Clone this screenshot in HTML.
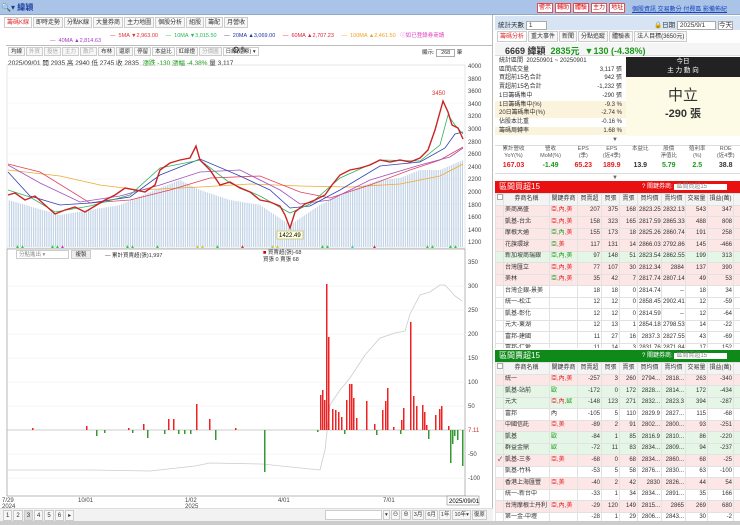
<!DOCTYPE html>
<html><head><meta charset="utf-8"><style>
*{box-sizing:border-box;margin:0;padding:0}
body{width:740px;height:525px;overflow:hidden;background:#fff;font-family:"Liberation Sans","Noto Sans CJK TC",sans-serif;font-size:7px;color:#333;position:relative}
.abs{position:absolute}
.top{left:0;top:0;width:740px;height:15px;background:#a9c4e6;border-bottom:1px solid #8fa9cc}
.btnr{display:inline-block;border:1px solid #e05050;background:#fff;color:#d00;padding:0 1px;height:10px;line-height:9px;margin-right:2px;font-size:6px}
.tabs{white-space:nowrap}
.tabs span{display:inline-block;border:1px solid #ccc;background:#f7f7f7;padding:0 2px;height:11px;line-height:10px;margin-right:1px;font-size:6px;vertical-align:top}
.tb span{height:9px;line-height:8px;font-size:5.5px;padding:0 2px}
.bb span{font-size:5.5px;padding:0 1px;height:10px;line-height:9px}
.wrap{overflow:hidden}
table{border-collapse:collapse;table-layout:fixed;width:245px}
tr{height:11.5px}
td{border:1px solid #e2e2e2;height:11.5px;line-height:9px;font-size:6px;padding:0 1px;white-space:nowrap;overflow:hidden;text-align:right}
td.l{text-align:left}
tr.p td{background:#fde6e6}
tr.g td{background:#e6f6e6}
tr.h td{background:#f4f4f4;text-align:center}
.r{color:#e02020}.gr{color:#1a9a1a}
.cb{display:inline-block;width:6px;height:6px;border:1px solid #aaa;background:#fff}
</style></head><body>
<div class="abs top"></div>
<div class="abs" style="left:1px;top:2px;font-size:8px;color:#1a3f8f">🔍▾ <b style="color:#1c3ea0">緯穎</b></div>
<div class="abs" style="left:537px;top:3px;white-space:nowrap"><span class="btnr">警示</span><span class="btnr">輔助</span><span class="btnr">體驗</span><span class="btnr">主力</span><span class="btnr">地址</span></div>
<div class="abs" style="left:632px;top:4px;color:#1a3fbf;text-decoration:underline;font-size:6px;white-space:nowrap">個股資訊 交易數分 付費區 影備佈紀</div>

<div class="abs" style="left:0;top:15px;width:493px;height:510px;border-right:1px solid #bbb;background:#fff"></div>
<div class="abs tabs" style="left:4px;top:17px"><span style="color:#e03030;background:#fff">籌碼K線</span><span>即時走勢</span><span>分點K線</span><span>大量券商</span><span>主力地圖</span><span>個股分析</span><span>組股</span><span>籌配</span><span>月營收</span></div>
<div class="abs" style="left:110px;top:31px;font-size:5.5px;white-space:nowrap"><span style="color:#e03030">— &nbsp;5MA ▼2,963.00</span> &nbsp;&nbsp;&nbsp;&nbsp;<span style="color:#22bb55">— &nbsp;10MA ▼3,015.50</span> &nbsp;&nbsp;&nbsp;&nbsp;<span style="color:#2233aa">— &nbsp;20MA ▲3,069.00</span> &nbsp;&nbsp;&nbsp;&nbsp;<span style="color:#e0203a">— &nbsp;60MA ▲2,707.23</span> &nbsp;&nbsp;&nbsp;&nbsp;<span style="color:#f0a020">— &nbsp;100MA ▲2,461.50</span> &nbsp;&nbsp;<span style="color:#e040c0">ⓘ如已登錄券商請</span></div>
<div class="abs" style="left:50px;top:38px;font-size:5.5px;color:#a040c0;white-space:nowrap">— &nbsp;40MA ▲2,814.63</div>
<div class="abs" style="left:6px;top:45px;width:487px;height:1px;background:#bbb"></div>
<div class="abs tabs tb" style="left:8px;top:47px"><span>均線</span><span style="color:#aaa">外資</span><span style="color:#aaa">投信</span><span style="color:#aaa">主力</span><span style="color:#aaa">散戶</span><span>布林</span><span>還原</span><span>停留</span><span>本益比</span><span>紅綠燈</span><span style="color:#aaa">分價圖</span><span style="background:#fff;width:36px">日線(還原) ▾</span></div>
<div class="abs" style="left:232px;top:45px;font-size:9px">⚙✎</div>
<div class="abs" style="left:422px;top:48px;font-size:5.5px;white-space:nowrap">顯示: <span style="border:1px solid #aaa;padding:0 4px">268</span> 筆</div>
<div class="abs" style="left:8px;top:57px;font-size:6.5px;white-space:nowrap">2025/09/01 開 2935 高 2940 低 2745 收 2835 &nbsp;<span class="gr">漲跌 -130 漲幅 -4.38%</span> 量 3,117</div>

<svg class="abs" style="left:0;top:60px" width="493" height="450" viewBox="0 60 493 450">
<defs><pattern id="vb" width="2.2" height="10" patternUnits="userSpaceOnUse"><rect width="1.2" height="10" fill="#b9cde3"/></pattern></defs>
<rect x="7" y="65" width="458" height="183" fill="none" stroke="#ccc" stroke-width="0.5"/>
<g stroke="#f0f0f0" stroke-width="0.5">
<line x1="7" y1="78" x2="465" y2="78"/><line x1="7" y1="103" x2="465" y2="103"/><line x1="7" y1="128" x2="465" y2="128"/><line x1="7" y1="154" x2="465" y2="154"/><line x1="7" y1="179" x2="465" y2="179"/><line x1="7" y1="204" x2="465" y2="204"/><line x1="7" y1="229" x2="465" y2="229"/></g>
<path d="M8 200 L60 215 L90 210 L120 205 L150 192 L180 180 L200 190 L230 200 L260 205 L290 225 L320 205 L350 190 L380 180 L400 178 L420 170 L440 170 L463 160 L463 247 L8 247Z" fill="url(#vb)" opacity="0.9"/>
<g font-size="6" fill="#444">
<text x="468" y="68">4000</text><text x="468" y="81">3800</text><text x="468" y="93">3600</text><text x="468" y="106">3400</text><text x="468" y="118">3200</text><text x="468" y="131">3000</text><text x="468" y="144">2800</text><text x="468" y="156">2600</text><text x="468" y="169">2400</text><text x="468" y="181">2200</text><text x="468" y="194">2000</text><text x="468" y="207">1800</text><text x="468" y="219">1600</text><text x="468" y="232">1400</text><text x="468" y="244">1200</text></g>
<polyline fill="none" stroke="#f0a830" stroke-width="0.8" points="8,170 60,176 100,185 140,190 200,187 250,184 300,186 350,187 400,184 440,176 463,164"/>
<polyline fill="none" stroke="#e0405a" stroke-width="0.8" points="8,164 40,172 90,203 130,200 170,190 210,178 260,176 300,192 330,198 370,185 410,170 440,160 463,147"/>
<polyline fill="none" stroke="#a050c0" stroke-width="0.8" points="8,165 40,183 80,202 120,196 160,185 200,172 240,170 280,190 300,204 330,200 370,180 420,165 450,157 463,148"/>
<polyline fill="none" stroke="#3040b0" stroke-width="0.8" points="8,172 30,196 60,205 90,203 130,197 160,175 200,159 240,176 270,190 290,208 310,206 340,190 380,166 420,162 445,148 455,134 463,132"/>
<polyline fill="none" stroke="#30b060" stroke-width="0.8" points="8,190 30,197 55,212 90,206 130,195 160,168 200,160 230,183 260,196 290,213 310,204 340,178 380,160 420,161 440,145 448,115 455,125 463,134"/>
<polyline fill="none" stroke="#cc2222" stroke-width="1.4" points="8,195 15,193 25,200 35,196 45,205 55,214 65,210 75,207 85,212 95,206 105,200 115,195 125,188 135,190 145,192 155,185 160,170 170,163 180,160 190,158 196,146 200,160 210,170 220,185 230,182 240,188 250,192 260,200 270,202 280,206 285,215 290,228 295,212 305,204 315,200 325,195 332,185 340,175 350,170 360,168 370,165 380,160 390,162 400,160 410,162 420,158 428,150 435,130 440,112 443,101 448,112 452,125 458,128 463,139"/>
<text x="432" y="95" font-size="6" fill="#e03030">3450</text>
<rect x="277" y="231" width="26" height="8" fill="#ffffe0" stroke="#cc9"/><text x="279" y="237" font-size="6">1422.49</text>
<g font-size="5"><text x="15" y="248" fill="#3c3">▲▲</text><text x="50" y="248" fill="#3c3">▲▲</text><text x="60" y="248" fill="#c3c">▲</text><text x="125" y="248" fill="#3c3">▲▲</text><text x="155" y="248" fill="#3c3">▲</text><text x="195" y="248" fill="#cc3">▲▲</text><text x="215" y="248" fill="#3c3">▲</text><text x="240" y="248" fill="#c33">▲</text><text x="270" y="248" fill="#cc3">▲▲</text><text x="320" y="248" fill="#3c3">▲▲</text><text x="350" y="248" fill="#3cc">▲</text><text x="372" y="248" fill="#c33">▲</text><text x="425" y="248" fill="#3c3">▲▲</text><text x="448" y="248" fill="#3c3">▲▲</text></g>
<rect x="7" y="249" width="458" height="247" fill="none" stroke="#888" stroke-width="0.6"/>
<g stroke="#eee" stroke-width="0.5"><line x1="7" y1="286" x2="465" y2="286"/><line x1="7" y1="310" x2="465" y2="310"/><line x1="7" y1="334" x2="465" y2="334"/><line x1="7" y1="358" x2="465" y2="358"/><line x1="7" y1="382" x2="465" y2="382"/><line x1="7" y1="406" x2="465" y2="406"/><line x1="7" y1="454" x2="465" y2="454"/><line x1="7" y1="478" x2="465" y2="478"/></g>
<line x1="7" y1="430" x2="465" y2="430" stroke="#bbb" stroke-width="0.8"/>
<g font-size="6" fill="#444"><text x="468" y="264">350</text><text x="468" y="288">300</text><text x="468" y="312">250</text><text x="468" y="336">200</text><text x="468" y="360">150</text><text x="468" y="384">100</text><text x="468" y="408">50</text><text x="468" y="432" fill="#c33">7.11</text><text x="468" y="456">-50</text><text x="468" y="480">-100</text></g>
<polyline fill="none" stroke="#ccc" stroke-width="0.8" points="8,470 90,470 150,471 195,466 210,463 262,464 320,470 325,450 330,405 340,390 350,378 365,355 380,338 395,333 405,331 410,314 420,295 430,292 440,285 445,285 455,296 462,301"/>
<g fill="#e22">
<rect x="32" y="428" width="1.5" height="2"/><rect x="86" y="426" width="1.5" height="4"/><rect x="128" y="428" width="1.5" height="2"/><rect x="143" y="424" width="1.5" height="6"/><rect x="168" y="419" width="1.5" height="11"/><rect x="173" y="419" width="1.5" height="11"/><rect x="196" y="404" width="1.5" height="26"/><rect x="209" y="419" width="1.5" height="11"/><rect x="235" y="428" width="1.5" height="2"/>
<rect x="320" y="395" width="1.5" height="35"/><rect x="322" y="390" width="1.5" height="40"/><rect x="324" y="400" width="1.5" height="30"/><rect x="326" y="284" width="1.5" height="146"/><rect x="328" y="337" width="1.5" height="93"/><rect x="332" y="409" width="1.5" height="21"/><rect x="335" y="410" width="1.5" height="20"/><rect x="338" y="412" width="1.5" height="18"/><rect x="341" y="417" width="1.5" height="13"/><rect x="346" y="400" width="1.5" height="30"/><rect x="349" y="384" width="1.5" height="46"/><rect x="351" y="384" width="1.5" height="46"/><rect x="353" y="398" width="1.5" height="32"/><rect x="356" y="418" width="1.5" height="12"/><rect x="366" y="401" width="1.5" height="29"/><rect x="374" y="424" width="1.5" height="6"/><rect x="382" y="410" width="1.5" height="20"/><rect x="385" y="401" width="1.5" height="29"/><rect x="387" y="388" width="1.5" height="42"/><rect x="393" y="427" width="1.5" height="3"/><rect x="401" y="420" width="1.5" height="10"/><rect x="403" y="408" width="1.5" height="22"/><rect x="410" y="322" width="1.5" height="108"/><rect x="413" y="396" width="1.5" height="34"/><rect x="416" y="406" width="1.5" height="24"/><rect x="422" y="405" width="1.5" height="25"/><rect x="424" y="412" width="1.5" height="18"/><rect x="426" y="425" width="1.5" height="5"/><rect x="435" y="415" width="1.5" height="15"/><rect x="439" y="409" width="1.5" height="21"/><rect x="441" y="406" width="1.5" height="24"/><rect x="448" y="426" width="1.5" height="4"/></g>
<g fill="#393">
<rect x="96" y="430" width="1.5" height="6"/><rect x="104" y="430" width="1.5" height="3"/><rect x="132" y="430" width="1.5" height="3"/><rect x="147" y="430" width="1.5" height="8"/><rect x="164" y="430" width="1.5" height="4"/><rect x="178" y="430" width="1.5" height="4"/><rect x="184" y="430" width="1.5" height="4"/><rect x="190" y="430" width="1.5" height="4"/><rect x="215" y="430" width="1.5" height="10"/><rect x="264" y="430" width="1.5" height="42"/><rect x="317" y="430" width="1.5" height="2"/><rect x="344" y="430" width="1.5" height="4"/><rect x="376" y="430" width="1.5" height="5"/><rect x="400" y="430" width="1.5" height="4"/><rect x="428" y="430" width="1.5" height="9"/><rect x="450" y="430" width="1.5" height="33"/><rect x="452" y="430" width="1.5" height="14"/><rect x="454" y="430" width="1.5" height="6"/><rect x="457" y="430" width="1.5" height="10"/><rect x="462" y="430" width="1.5" height="36"/></g>
<g font-size="6" fill="#444"><text x="2" y="502">7/29</text><text x="2" y="508">2024</text><text x="78" y="502">10/01</text><text x="185" y="502">1/02</text><text x="185" y="508">2025</text><text x="278" y="502">4/01</text><text x="383" y="502">7/01</text></g>
<rect x="447" y="496" width="32" height="9" fill="#fff" stroke="#888" stroke-width="0.6"/><text x="449" y="503" font-size="6">2025/09/01</text>
</svg>
<div class="abs" style="left:16px;top:250px;width:53px;height:9px;border:1px solid #ccc;font-size:5.5px;line-height:8px;color:#888;padding-left:2px;white-space:nowrap">分點進出 ▾</div>
<div class="abs" style="left:71px;top:250px;width:20px;height:9px;background:#eee;border:1px solid #ccc;font-size:5.5px;line-height:8px;text-align:center">複製</div>
<div class="abs" style="left:105px;top:251px;font-size:5.5px;white-space:nowrap">— 累計買賣超(張)1,997</div>
<div class="abs" style="left:263px;top:250px;font-size:5.5px;line-height:7px;white-space:nowrap"><span style="color:#c00">■</span> 買賣超(張)-68<br>買張 0 賣張 68</div>
<div class="abs" style="left:0;top:508px;width:493px;height:13px;background:#f2f2f2;border-top:1px solid #ddd"></div>
<div class="abs tabs" style="left:3px;top:510px"><span>1</span><span>2</span><span style="background:#ddd">3</span><span>4</span><span>5</span><span>6</span><span>▸</span></div>
<div class="abs" style="left:325px;top:510px;width:57px;height:10px;background:#fff;border:1px solid #ccc"></div>
<div class="abs tabs bb" style="left:383px;top:510px"><span>▾</span><span>⊖</span><span>⊕</span><span>3月</span><span>6月</span><span>1年</span><span>10年▾</span><span>復原</span></div>
<div class="abs" style="left:0;top:521px;width:740px;height:4px;background:#ccc"></div>

<div class="abs" style="left:495px;top:16px;width:245px;height:14px;background:#d6e4f3"></div>
<div class="abs" style="left:498px;top:19px;font-size:6.5px;white-space:nowrap">統計天數 <span style="background:#fff;border:1px solid #aaa;padding:0 14px 0 2px">1</span></div>
<div class="abs" style="left:654px;top:19px;font-size:6.5px;white-space:nowrap">🔒日期 <span style="background:#fff;border:1px solid #aaa;padding:0 10px 0 2px">2025/9/1</span> <span style="background:#fff;border:1px solid #aaa">今天</span></div>
<div class="abs tabs" style="left:497px;top:31px"><span style="color:#e03030;background:#fff">籌碼分析</span><span>重大事件</span><span>新聞</span><span>分點追蹤</span><span>體驗表</span><span>法人目標(3650元)</span></div>
<div class="abs" style="left:495px;top:43px;width:245px;height:13px;background:#f5f5f5;border-bottom:1px solid #ddd"></div>
<div class="abs" style="left:505px;top:44px;font-size:9px;font-weight:bold;white-space:nowrap">6669 緯穎 &nbsp;<span style="color:#1a9a1a">2835元 &nbsp;▼130 (-4.38%)</span></div>
<div class="abs" style="left:495px;top:57px;width:131px;font-size:6px;line-height:8.7px;white-space:nowrap">
<div style="padding-left:4px">統計區間 &nbsp;20250901 ~ 20250901</div>
<div style="display:flex;padding:0 4px"><span style="flex:1">區間成交量</span><span>3,117 張</span></div>
<div style="display:flex;padding:0 4px"><span style="flex:1">買超前15名合計</span><span>942 張</span></div>
<div style="display:flex;padding:0 4px"><span style="flex:1">賣超前15名合計</span><span>-1,232 張</span></div>
<div style="display:flex;padding:0 4px"><span style="flex:1">1日籌碼集中</span><span>-290 張</span></div>
<div style="display:flex;padding:0 4px;background:#fcf3dc"><span style="flex:1">1日籌碼集中(%)</span><span>-9.3 %</span></div>
<div style="display:flex;padding:0 4px;background:#fcf3dc"><span style="flex:1">20日籌碼集中(%)</span><span>-2.74 %</span></div>
<div style="display:flex;padding:0 4px"><span style="flex:1">佔股本比重</span><span>-0.16 %</span></div>
<div style="display:flex;padding:0 4px;background:#fcf3dc"><span style="flex:1">籌碼周轉率</span><span>1.68 %</span></div></div>
<div class="abs" style="left:626px;top:57px;width:114px;height:20px;background:#222;color:#fff;text-align:center;font-size:6.5px;line-height:9px">今日<br>主 力 動 向</div>
<div class="abs" style="left:626px;top:77px;width:114px;height:59px;background:#fdfbe6;text-align:center;color:#333"><div style="font-size:15px;margin-top:7px">中立</div><div style="font-size:11px;font-weight:bold">-290 張</div></div>
<div class="abs" style="left:612px;top:137px;font-size:6px;color:#666">▼</div>
<div class="abs" style="left:495px;top:145px;width:245px;height:29px;border-top:1px solid #ddd;border-bottom:1px solid #ddd;display:flex;font-size:5.5px;line-height:6.5px;text-align:center;color:#555">
<div style="flex:1.3">累計營收<br>YoY(%)<br><b style="font-size:7px;color:#e02020;line-height:14px">167.03</b></div><div style="flex:1.3">營收<br>MoM(%)<br><b style="font-size:7px;color:#1a9a1a;line-height:14px">-1.49</b></div><div style="flex:1">EPS<br>(季)<br><b style="font-size:7px;color:#e02020;line-height:14px">65.23</b></div><div style="flex:1">EPS<br>(近4季)<br><b style="font-size:7px;color:#e02020;line-height:14px">189.9</b></div><div style="flex:1">本益比<br>&nbsp;<br><b style="font-size:7px;color:#333;line-height:14px">13.9</b></div><div style="flex:1">股價<br>淨值比<br><b style="font-size:7px;color:#1a9a1a;line-height:14px">5.79</b></div><div style="flex:1">殖利率<br>(%)<br><b style="font-size:7px;color:#1a9a1a;line-height:14px">2.5</b></div><div style="flex:1">ROE<br>(近4季)<br><b style="font-size:7px;color:#333;line-height:14px">38.8</b></div></div>
<div class="abs" style="left:612px;top:175px;font-size:6px;color:#666">▼</div>

<div class="abs" style="left:495px;top:181px;width:245px;height:12px;background:#e81010;color:#fff;font-size:8px;padding-left:4px;line-height:12px;white-space:nowrap">區間買超15<span style="position:absolute;left:147px;font-size:6px">? 關鍵券商: <span style="background:#fff;color:#888;padding:0 20px 0 2px">區間買超15</span></span></div>
<div class="abs wrap" style="left:495px;top:193px;height:155px;width:245px">
<table><colgroup><col style="width:8px"><col style="width:46px"><col style="width:28px"><col style="width:24px"><col style="width:18px"><col style="width:18px"><col style="width:24px"><col style="width:24px"><col style="width:22px"><col style="width:26px"><col style="width:7px"></colgroup>
<tr class="h"><td><span class="cb"></span></td><td>券商名稱</td><td>關鍵券商</td><td>買賣超</td><td>買張</td><td>賣張</td><td>買均價</td><td>賣均價</td><td>交易量</td><td>損益(萬)</td><td></td></tr>
<tr class="p"><td></td><td class="l">美商高盛</td><td class="l r">亞,內,美</td><td>207</td><td>375</td><td>168</td><td>2823.25</td><td>2832.13</td><td>543</td><td>347</td><td></td></tr>
<tr class="p"><td></td><td class="l">凱基-台北</td><td class="l r">亞,內,美</td><td>158</td><td>323</td><td>165</td><td>2817.59</td><td>2865.33</td><td>488</td><td>808</td><td></td></tr>
<tr class="p"><td></td><td class="l">摩根大通</td><td class="l gr">亞,內,<span class="r">美</span></td><td>155</td><td>173</td><td>18</td><td>2825.26</td><td>2860.74</td><td>191</td><td>258</td><td></td></tr>
<tr class="p"><td></td><td class="l">花旗環球</td><td class="l gr">亞,<span class="r">美</span></td><td>117</td><td>131</td><td>14</td><td>2866.03</td><td>2792.86</td><td>145</td><td>-466</td><td></td></tr>
<tr class="g"><td></td><td class="l">新加坡商瑞銀</td><td class="l gr">亞,內,美</td><td>97</td><td>148</td><td>51</td><td>2823.54</td><td>2862.55</td><td>199</td><td>313</td><td></td></tr>
<tr class="p"><td></td><td class="l">台灣匯立</td><td class="l r">亞,內,美</td><td>77</td><td>107</td><td>30</td><td>2812.34</td><td>2884</td><td>137</td><td>390</td><td></td></tr>
<tr class="p"><td></td><td class="l">美林</td><td class="l gr">亞,<span class="r">內,美</span></td><td>35</td><td>42</td><td>7</td><td>2817.74</td><td>2807.14</td><td>49</td><td>53</td><td></td></tr>
<tr><td></td><td class="l">台灣企銀-景美</td><td></td><td>18</td><td>18</td><td>0</td><td>2814.74</td><td>--</td><td>18</td><td>34</td><td></td></tr>
<tr><td></td><td class="l">統一-松江</td><td></td><td>12</td><td>12</td><td>0</td><td>2858.45</td><td>2902.41</td><td>12</td><td>-59</td><td></td></tr>
<tr><td></td><td class="l">凱基-彰化</td><td></td><td>12</td><td>12</td><td>0</td><td>2814.59</td><td>--</td><td>12</td><td>-64</td><td></td></tr>
<tr><td></td><td class="l">元大-東湖</td><td></td><td>12</td><td>13</td><td>1</td><td>2854.18</td><td>2798.53</td><td>14</td><td>-22</td><td></td></tr>
<tr><td></td><td class="l">富邦-建國</td><td></td><td>11</td><td>27</td><td>16</td><td>2837.3</td><td>2827.55</td><td>43</td><td>-69</td><td></td></tr>
<tr><td></td><td class="l">富邦-仁愛</td><td></td><td>11</td><td>14</td><td>3</td><td>2831.76</td><td>2871.84</td><td>17</td><td>152</td><td></td></tr>
</table></div>

<div class="abs" style="left:495px;top:350px;width:245px;height:12px;background:#0f8a1a;color:#fff;font-size:8px;padding-left:4px;line-height:12px;white-space:nowrap">區間賣超15<span style="position:absolute;left:147px;font-size:6px">? 關鍵券商: <span style="background:#fff;color:#888;padding:0 20px 0 2px">區間賣超15</span></span></div>
<div class="abs wrap" style="left:495px;top:362px;height:159px;width:245px">
<table><colgroup><col style="width:8px"><col style="width:46px"><col style="width:28px"><col style="width:24px"><col style="width:18px"><col style="width:18px"><col style="width:24px"><col style="width:24px"><col style="width:22px"><col style="width:26px"><col style="width:7px"></colgroup>
<tr class="h"><td><span class="cb"></span></td><td>券商名稱</td><td>關鍵券商</td><td>買賣超</td><td>買張</td><td>賣張</td><td>買均價</td><td>賣均價</td><td>交易量</td><td>損益(萬)</td><td></td></tr>
<tr class="p"><td></td><td class="l">統一</td><td class="l r">亞,內,美</td><td>-257</td><td>3</td><td>260</td><td>2794...</td><td>2818...</td><td>263</td><td>-340</td><td></td></tr>
<tr class="g"><td></td><td class="l">凱基-站前</td><td class="l gr">歐</td><td>-172</td><td>0</td><td>172</td><td>2828...</td><td>2814...</td><td>172</td><td>-434</td><td></td></tr>
<tr class="g"><td></td><td class="l">元大</td><td class="l r">亞,內,<span class="gr">歐</span></td><td>-148</td><td>123</td><td>271</td><td>2832...</td><td>2823.3</td><td>394</td><td>-287</td><td></td></tr>
<tr><td></td><td class="l">富邦</td><td class="l">內</td><td>-105</td><td>5</td><td>110</td><td>2829.9</td><td>2827...</td><td>115</td><td>-68</td><td></td></tr>
<tr class="p"><td></td><td class="l">中國信託</td><td class="l r">亞,美</td><td>-89</td><td>2</td><td>91</td><td>2802...</td><td>2800...</td><td>93</td><td>-251</td><td></td></tr>
<tr class="g"><td></td><td class="l">凱基</td><td class="l gr">歐</td><td>-84</td><td>1</td><td>85</td><td>2816.9</td><td>2810...</td><td>86</td><td>-220</td><td></td></tr>
<tr class="g"><td></td><td class="l">群益金鼎</td><td class="l gr">歐</td><td>-72</td><td>11</td><td>83</td><td>2834...</td><td>2809...</td><td>94</td><td>-237</td><td></td></tr>
<tr class="p"><td>✓</td><td class="l">凱基-三多</td><td class="l r">亞,美</td><td>-68</td><td>0</td><td>68</td><td>2834...</td><td>2860...</td><td>68</td><td>-25</td><td></td></tr>
<tr><td></td><td class="l">凱基-竹科</td><td></td><td>-53</td><td>5</td><td>58</td><td>2876...</td><td>2830...</td><td>63</td><td>-100</td><td></td></tr>
<tr class="p"><td></td><td class="l">香港上海匯豐</td><td class="l r">亞,美</td><td>-40</td><td>2</td><td>42</td><td>2830</td><td>2826...</td><td>44</td><td>54</td><td></td></tr>
<tr><td></td><td class="l">統一-新台中</td><td></td><td>-33</td><td>1</td><td>34</td><td>2834...</td><td>2891...</td><td>35</td><td>166</td><td></td></tr>
<tr class="p"><td></td><td class="l">台灣摩根士丹利</td><td class="l r">亞,內,美</td><td>-29</td><td>120</td><td>149</td><td>2815...</td><td>2865</td><td>269</td><td>680</td><td></td></tr>
<tr><td></td><td class="l">第一金-中壢</td><td></td><td>-28</td><td>1</td><td>29</td><td>2806...</td><td>2843...</td><td>30</td><td>-2</td><td></td></tr>
</table></div>
</body></html>
